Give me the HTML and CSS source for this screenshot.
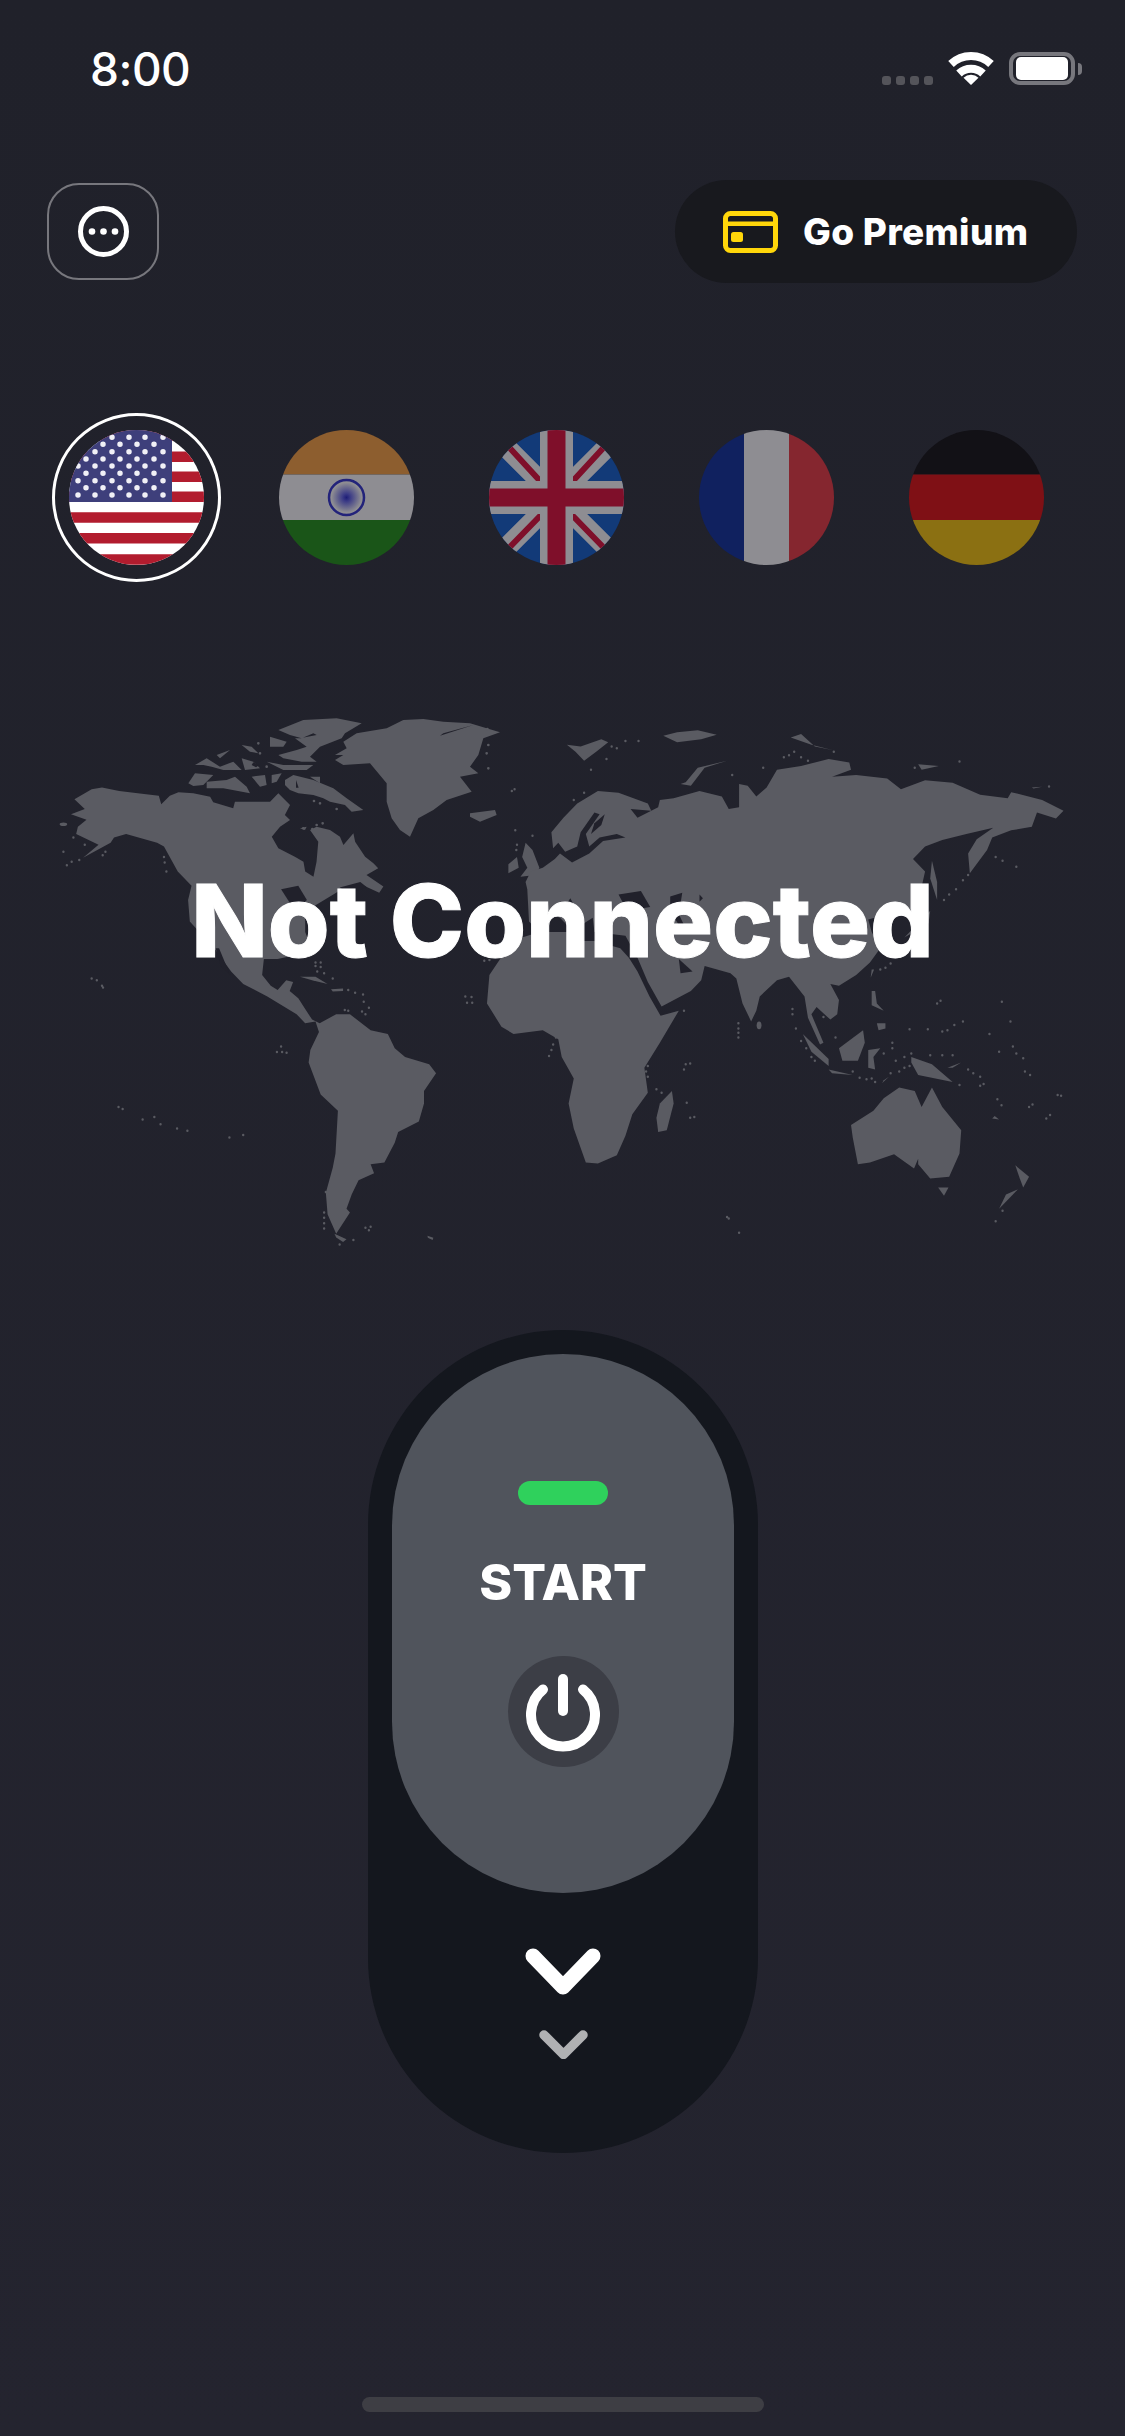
FILE: index.html
```html
<!DOCTYPE html>
<html lang="en">
<head>
<meta charset="utf-8">
<title>VPN</title>
<link rel="stylesheet" href="styles.css">
</head>
<body>
<main class="screen">
  <header class="status">
    <span class="time">8:00</span>
    <div class="status-icons">
      <div class="signal"><i></i><i></i><i></i><i></i></div>
      <svg class="wifi" viewBox="0 0 46 33"><path d="M3 12A29 29 0 0 1 43 12" fill="none" stroke="#fff" stroke-width="8"/><path d="M11 21.500A17.500 17.500 0 0 1 35 21.500" fill="none" stroke="#fff" stroke-width="8"/><path d="M23 33L15.500 25.800A11 11 0 0 1 30.500 25.800z" fill="#fff"/></svg>
      <div class="battery"><div class="battery-body"><div class="battery-fill"></div></div><div class="battery-nub"></div></div>
    </div>
  </header>

  <nav class="topbar">
    <button class="menu-btn" type="button" aria-label="Menu">
      <svg class="menu-icon" viewBox="0 0 51 51"><circle cx="25.500" cy="25.500" r="23" fill="none" stroke="#fff" stroke-width="5"/><circle cx="14" cy="25.500" r="3.300" fill="#fff"/><circle cx="25.500" cy="25.500" r="3.300" fill="#fff"/><circle cx="37" cy="25.500" r="3.300" fill="#fff"/></svg>
    </button>
    <button class="premium-btn" type="button">
      <svg class="card-icon" viewBox="0 0 55 42"><rect x="2.500" y="2.500" width="50" height="37" rx="5" fill="none" stroke="#ffd60a" stroke-width="5"/><rect x="2" y="10.500" width="51" height="4.500" fill="#ffd60a"/><rect x="8" y="21" width="12" height="10" rx="2.500" fill="#ffd60a"/></svg>
      <span>Go Premium</span>
    </button>
  </nav>

  <section class="flags">
    <div class="flag-item selected">
      <svg class="flag" viewBox="0 0 135 135">
        <rect width="135" height="135" fill="#fff"/>
        <path d="M0 5.800H135M0 26.700H135M0 46.700H135M0 66.800H135M0 87.600H135M0 108.300H135M0 129.500H135" stroke="#b21c2e" stroke-width="10.500"/>
        <rect width="103" height="72" fill="#3e3f7b"/>
        <path d="M26 7.300h0M43 7.300h0M60 7.300h0M76 7.300h0M94 7.300h0M17 14.300h0M34 14.300h0M51 14.300h0M68 14.300h0M85 14.300h0M9 21.700h0M26 21.700h0M43 21.700h0M60 21.700h0M76 21.700h0M94 21.700h0M17 29h0M34 29h0M51 29h0M68 29h0M85 29h0M9 36h0M26 36h0M43 36h0M60 36h0M76 36h0M94 36h0M17 43.300h0M34 43.300h0M51 43.300h0M68 43.300h0M85 43.300h0M9 50.700h0M26 50.700h0M43 50.700h0M60 50.700h0M76 50.700h0M94 50.700h0M17 57.700h0M34 57.700h0M51 57.700h0M68 57.700h0M85 57.700h0M9 65h0M26 65h0M43 65h0M60 65h0M76 65h0M94 65h0" stroke="#f0f0f6" stroke-width="5.500" stroke-linecap="round" fill="none"/>
      </svg>
    </div>
    <div class="flag-item">
      <svg class="flag" viewBox="0 0 135 135">
        <defs><radialGradient id="chakra"><stop offset="0" stop-color="#1d1d76"/><stop offset=".25" stop-color="#3a3a86"/><stop offset="1" stop-color="#8e8d92"/></radialGradient></defs>
        <rect width="135" height="44.500" fill="#8d5e2f"/>
        <rect y="44.500" width="135" height="45.500" fill="#8e8d92"/>
        <rect y="90" width="135" height="45" fill="#1a5518"/>
        <circle cx="67.500" cy="67.500" r="15" fill="url(#chakra)"/>
        <circle cx="67.500" cy="67.500" r="17.500" fill="none" stroke="#23237a" stroke-width="2.500"/>
      </svg>
    </div>
    <div class="flag-item">
      <svg class="flag" viewBox="0 0 135 135">
        <rect width="135" height="135" fill="#123a78"/>
        <path d="M0 0L135 135M135 0L0 135" stroke="#8e8d92" stroke-width="20"/>
        <path d="M18 15L52 52M117 120L83 85M18 120L52 85M117 15L83 52" stroke="#7f0f2a" stroke-width="6"/>
        <path d="M67.500 0V135M0 67.500H135" stroke="#8e8d92" stroke-width="33"/>
        <path d="M67.500 0V135M0 67.500H135" stroke="#7f0f2a" stroke-width="18"/>
      </svg>
    </div>
    <div class="flag-item">
      <svg class="flag" viewBox="0 0 135 135">
        <rect width="45" height="135" fill="#10215f"/>
        <rect x="45" width="45" height="135" fill="#8e8d92"/>
        <rect x="90" width="45" height="135" fill="#85262f"/>
      </svg>
    </div>
    <div class="flag-item">
      <svg class="flag" viewBox="0 0 135 135">
        <rect width="135" height="44.500" fill="#121116"/>
        <rect y="44.500" width="135" height="45.500" fill="#7f1015"/>
        <rect y="90" width="135" height="45" fill="#8b7012"/>
      </svg>
    </div>
  </section>

  <section class="map-area">
    <svg class="world" viewBox="0 0 1125 560" aria-hidden="true">
      <g class="land" transform="translate(40 0) scale(.3444 .3571)">
        <path d="M100 278L150 250 180 245 230 255 290 262 345 268 352 292 377 268 402 258 445 261 494 271 503 286 561 303 566 285 615 285 668 285 692 261 726 294 711 322 726 336 697 355 673 383 692 415 740 439 765 453 770 480 794 495 803 453 808 397 784 364 803 355 842 364 871 383 881 406 910 373 915 397 944 439 968 457 982 471 948 490 997 522 985 540 930 515 880 525 860 540 800 575 770 610 770 650 790 700 770 720 740 715 690 725 650 725 645 770 670 800 690 812 715 785 735 790 725 815 750 835 770 865 790 895 812 905 860 880 900 880 960 925 1010 935 1030 975 1060 1000 1130 1020 1150 1045 1115 1095 1115 1130 1100 1180 1040 1210 1030 1240 1000 1295 960 1300 970 1325 925 1345 905 1385 890 1425 900 1435 860 1495 835 1440 830 1380 850 1310 858 1270 865 1150 815 1105 780 1015 785 980 810 930 800 900 770 905 745 880 660 830 590 795 555 760 510 700 435 620 430 560 440 520 400 480 360 410 340 400 250 375 215 385 205 400 125 442 170 405 105 375 110 355 135 335 90 320 130 305z"/>
        <path d="M755 775L800 775 835 795 790 785z"/>
        <path d="M845 810L880 808 880 815 850 816z"/>
        <path d="M855 1495L890 1510 880 1518 860 1505z"/>
        <path d="M1410 400L1430 420 1450 470 1440 490 1395 495 1415 470 1400 440z"/>
        <path d="M1360 460L1385 440 1390 470 1360 485z"/>
        <path d="M1125 1500L1142 1506 1140 1512 1126 1506z"/>
        <ellipse cx="68" cy="348" rx="11" ry="5"/>
        <path class="dots" d="M150 780h0M165 785h0M180 800h0M183 805h0M228 1140h0M240 1145h0M298 1175h0M332 1168h0M350 1188h0M398 1200h0M428 1206h0M550 1225h0M590 1218h0M700 970h0M688 986h0M703 986h0M716 988h0M1235 830h0M1253 832h0M1240 848h0M1255 848h0M800 735h0M815 735h0M800 745h0M815 748h0M805 760h0M825 765h0M850 780h0M895 812h0M915 820h0M938 825h0M940 845h0M955 862h0M935 872h0M945 880h0M885 868h0M895 870h0M830 1378h0M825 1435h0M825 1450h0M825 1465h0M825 1480h0M945 1478h0M960 1475h0M955 1485h0M910 1512h0M870 1525h0M68 425h0M78 463h0M92 453h0M114 448h0M130 405h0M97 385h0M182 435h0M190 425h0M360 440h0M362 455h0M367 480h0M1290 730h0M1305 728h0M1498 945h0M1490 965h0M1485 980h0M1478 997h0M1370 255h0M1378 250h0M1380 365h0M1385 405h0M1383 420h0M1430 380h0"/>
      </g>
      <g class="land" transform="translate(170 5) scale(.33333)">
        <path d="M325 75L400 45 500 40 575 55 525 85 515 100 450 125 420 155 440 170 395 170 340 160 325 150 380 135 410 125 375 100 390 100 440 90 430 85 395 100 360 90z"/>
        <path d="M300 95L350 110 340 125 300 125z"/>
        <path d="M215 120L245 125 265 145 240 140z"/>
        <path d="M140 150L180 135 150 160z"/>
        <path d="M75 180L110 160 150 185 190 170 215 195 160 195 125 185 100 180z"/>
        <path d="M55 235L75 205 130 210 100 240 70 243z"/>
        <path d="M110 230L170 225 195 215 230 245 240 265 160 250 110 250z"/>
        <path d="M245 215L285 210 290 240 270 245z"/>
        <path d="M305 210L335 205 320 230 305 235z"/>
        <path d="M290 170L340 180 430 180 410 195 340 195z"/>
        <path d="M215 160L250 170 270 190 225 195z"/>
        <path d="M345 225L370 210 430 225 490 250 530 280 580 315 545 320 525 300 480 290 460 280 430 270 385 265 360 255 345 240z"/>
        <path d="M420 215L450 215 450 235z"/>
        <path d="M495 150L530 130 520 110 560 85 650 70 700 45 760 42 820 50 900 55 990 82 940 100 925 150 900 185 925 205 870 215 905 260 830 285 790 315 745 340 720 395 690 375 665 340 650 290 650 235 600 175 520 180 495 165 520 150z"/>
        <path d="M900 325L975 315 980 330 930 350 900 335z"/>
        <path d="M390 370L410 365 405 375z"/>
        <path class="dots dots-fine" d="M400 370h0M427 372h0M440 360h0M458 355h0M450 295h0M432 288h0M500 312h0M265 115h0M290 185h0M270 145h0M952 72h0M955 120h0M950 145h0M955 190h0"/>
      </g>
      <g class="water" transform="translate(170 5) scale(.33333)">
        <path d="M810 92L910 60 820 85z"/>
        <path d="M250 172L268 180 258 187 245 180z"/>
        <path d="M378 225L386 248 378 248z"/>
      </g>
      <g class="land" transform="translate(560 0) scale(.3444 .3571)">
        <path d="M-100 510L-85 480-50 470-15 445 0 430 35 455 85 430 125 395 190 385 165 375 115 385 85 410 75 375 115 320 100 315 60 370 50 410 15 425-5 400-20 415-25 370 10 330 50 290 110 255 170 260 255 290 265 310 205 305 225 330 285 300 290 280 330 275 405 255 470 270 490 305 520 300 520 235 545 240 570 270 600 245 630 195 700 185 780 165 840 175 845 195 790 215 860 210 950 220 990 250 1060 225 1140 232 1220 265 1300 275 1310 258 1400 280 1462 310 1440 332 1385 315 1370 355 1310 365 1255 385 1240 420 1190 485 1185 430 1210 390 1258 358 1180 375 1110 392 1060 410 1025 445 1060 480 1045 545 1015 590 985 580 950 600 895 615 905 650 930 695 900 735 860 770 810 800 785 795 810 840 805 880 785 895 745 860 730 880 765 960 755 965 720 890 710 830 665 775 630 785 580 830 570 870 555 900 530 850 512 780 495 765 420 745 410 785 380 815 295 858 255 790 225 722 190 660 100 650 95 610 70 625 65 665 45 640 55 600 30 555 20 570 30 625 50 660 0 610-25 600-35 625-75 635-90 620-95 530z"/>
        <path d="M-205 770L-212 850-170 915-135 935-50 925-5 950 5 1000 40 1060 25 1130 40 1200 75 1295 110 1298 165 1275 190 1220 210 1160 255 1100 245 1030 290 960 345 870 292 884 260 830 225 760 200 722 175 695 100 675 40 675 25 650-60 650-110 665-170 720z"/>
        <path d="M325 1095L330 1130 310 1205 285 1210 280 1170 290 1130z"/>
        <path d="M845 1190L910 1150 940 1115 985 1085 1030 1095 1050 1140 1080 1085 1110 1140 1165 1205 1160 1270 1130 1335 1075 1340 1040 1300 1040 1285 1028 1312 970 1272 900 1295 865 1300 850 1225z"/>
        <path d="M1098 1365L1128 1365 1115 1388z"/>
        <path d="M1322 1303L1362 1335 1345 1365 1335 1340z"/>
        <path d="M1330 1370L1275 1425 1295 1385z"/>
        <path d="M1020 1000L1080 1020 1140 1070 1090 1060 1040 1050 1020 1015z"/>
        <path d="M810 975L880 925 885 960 865 1010 820 1010z"/>
        <path d="M705 935L780 1005 780 1025 730 985z"/>
        <path d="M780 1035L850 1050 790 1045z"/>
        <path d="M895 980L930 975 910 1000 915 1035 895 1030z"/>
        <path d="M905 815L915 815 920 850 940 870 905 855z"/>
        <path d="M920 905L945 905 945 920 925 925z"/>
        <path d="M1080 450L1095 510 1095 560 1075 500z"/>
        <path d="M1075 590L1070 625 1000 665 1040 625z"/>
        <path d="M905 755L912 755 902 778z"/>
        <path d="M940 1065L955 1055 935 1073z"/>
        <path d="M1165 1015L1140 1030 1125 1030z"/>
        <path d="M1262 1165L1275 1175 1255 1172z"/>
        <path d="M20 125L60 130 120 110 140 118 105 145 70 170 45 145z"/>
        <path d="M300 100L340 90 400 85 455 97 410 110 340 118z"/>
        <path d="M670 105L700 95 740 130 790 140 730 125z"/>
        <path d="M365 230L400 190 485 170 420 190 380 240 350 235z"/>
        <path d="M1040 180L1100 185 1050 195z"/>
        <path d="M1370 245L1400 243 1375 248z"/>
        <ellipse cx="578" cy="911" rx="7" ry="11"/>
        <path class="dots" d="M675 865h0M675 880h0M518 905h0M518 920h0M518 932h0M518 945h0M255 1025h0M250 1040h0M255 1055h0M280 1090h0M295 1100h0M365 1020h0M378 1018h0M360 1035h0M368 1128h0M378 1170h0M390 1168h0M685 920h0M700 955h0M715 975h0M730 1000h0M740 1010h0M800 945h0M360 870h0M1265 440h0M1285 450h0M1325 467h0M1185 490h0M1170 505h0M1150 530h0M1130 545h0M1115 560h0M930 755h0M945 750h0M960 738h0M765 888h0M1095 850h0M1105 842h0M1283 845h0M1308 900h0M1247 935h0M1170 900h0M1145 910h0M1125 925h0M1110 928h0M1068 922h0M1015 922h0M1315 970h0M1325 990h0M1345 1003h0M1350 1040h0M1365 1050h0M1275 985h0M1185 1035h0M1200 1045h0M1220 1055h0M1230 1075h0M1220 1080h0M1160 1078h0M1270 1118h0M1282 1135h0M1372 1133h0M1362 1140h0M1423 1162h0M1412 1172h0M1445 1106h0M1455 1108h0M1285 1430h0M1265 1460h0M485 1448h0M490 1452h0M520 1492h0M1110 995h0M1140 995h0M1075 995h0M850 1040h0M870 1058h0M890 1062h0M905 1060h0M915 1070h0M960 1045h0M985 1040h0M1000 1030h0M1015 1025h0M940 990h0M965 975h0M965 960h0M975 1010h0M1000 1000h0M1020 990h0M150 130h0M165 135h0M190 115h0M228 115h0M650 160h0M665 155h0M680 145h0M700 160h0M720 170h0M795 145h0M590 190h0M500 210h0M135 165h0M90 195h0M40 280h0M70 260h0M1030 190h0M1160 172h0M1420 242h0"/>
      </g>
      <g class="water" transform="translate(560 0) scale(.3444 .3571)">
        <path d="M170 545L235 535 262 580 195 590z"/>
        <path d="M320 550L355 540 345 600 365 640 345 630 320 590z"/>
        <path d="M405 545L415 555 405 565z"/>
        <path d="M345 725L385 760 350 765z"/>
        <path d="M100 345L130 320 120 350 90 375z"/>
      </g>
      <g class="water" transform="translate(40 0) scale(.3444 .3571)">
        <path d="M510 695L520 695 552 770 525 745z"/>
        <path d="M870 525L930 510 950 525 900 540z"/>
        <path d="M700 530L750 520 775 560 740 590 720 560z"/>
      </g>
    </svg>
    <h1 class="title">Not Connected</h1>
  </section>

  <section class="switch">
    <div class="knob">
      <div class="led"></div>
      <div class="start">START</div>
      <div class="power">
        <svg class="power-icon" viewBox="0 0 74 78"><path d="M17 15.500A32 32 0 1 0 57 15.500" fill="none" stroke="#fff" stroke-width="10" stroke-linecap="round"/><path d="M37 5V37" fill="none" stroke="#fff" stroke-width="10" stroke-linecap="round"/></svg>
      </div>
    </div>
    <svg class="chev-large" viewBox="0 0 76 47"><path d="M8 8L38 39 68 8" fill="none" stroke="#fff" stroke-width="15" stroke-linecap="round" stroke-linejoin="round"/></svg>
    <svg class="chev-small" viewBox="0 0 49 29"><path d="M5 5L24.500 24.500 44 5" fill="none" stroke="#b0b1b3" stroke-width="9.500" stroke-linecap="round" stroke-linejoin="round"/></svg>
  </section>

  <div class="home-indicator"></div>
</main>
</body>
</html>
```
FILE: styles.css
```css
* { box-sizing: border-box; }
html, body { margin: 0; padding: 0; background: #212129; }
.screen {
  width: 1125px;
  height: 2436px;
  overflow: hidden;
  background: linear-gradient(#20212a, #24242f);
  font-family: Inter, "Liberation Sans", sans-serif;
  color: #fff;
}
.status {
  height: 100px;
  padding: 52px 43px 0 90px;
  display: flex;
  justify-content: space-between;
  align-items: flex-start;
}
.time {
  font-size: 46px;
  line-height: 34px;
  font-weight: 500;
  letter-spacing: -.5px;
}
.status-icons { display: flex; align-items: flex-start; }
.signal {
  display: flex;
  gap: 5px;
  margin-top: 24px;
  margin-right: 15px;
}
.signal i {
  width: 9px;
  height: 9px;
  border-radius: 3px;
  background: #54545a;
}
.wifi { width: 46px; height: 33px; margin-right: 15px; display: block; }
.battery { display: flex; align-items: center; height: 33px; }
.battery-body {
  width: 66px;
  height: 33px;
  border: 4px solid #77777d;
  border-radius: 11px;
  padding: 1px 3px;
}
.battery-fill { width: 100%; height: 100%; background: #fff; border-radius: 5px; }
.battery-nub {
  width: 4px;
  height: 12px;
  margin-left: 3px;
  background: #77777d;
  border-radius: 0 4px 4px 0;
}
.topbar {
  margin-top: 80px;
  height: 103px;
  padding: 0 48px 0 47px;
  display: flex;
  justify-content: space-between;
  align-items: center;
}
.menu-btn {
  width: 112px;
  height: 97px;
  padding: 0;
  background: transparent;
  border: 2px solid #77777d;
  border-radius: 32px;
  display: flex;
  align-items: center;
  justify-content: center;
}
.menu-icon { width: 51px; height: 51px; display: block; }
.premium-btn {
  width: 402px;
  height: 103px;
  padding: 0 0 0 48px;
  background: #18191e;
  border: 0;
  border-radius: 52px;
  display: flex;
  align-items: center;
  gap: 25px;
  color: #fff;
  font: 800 37px Inter, "Liberation Sans", sans-serif;
  letter-spacing: .3px;
}
.card-icon { width: 55px; height: 42px; display: block; }
.flags {
  margin-top: 130px;
  padding-left: 52px;
  display: flex;
  gap: 41px;
}
.flag-item {
  width: 169px;
  height: 169px;
  border-radius: 50%;
  display: flex;
  align-items: center;
  justify-content: center;
  border: 3px solid transparent;
}
.flag-item.selected { border-color: #fff; }
.flag {
  width: 135px;
  height: 135px;
  border-radius: 50%;
  display: block;
  filter: blur(.6px);
}
.map-area {
  position: relative;
  margin-top: 118px;
  height: 560px;
}
.world { width: 1125px; height: 560px; display: block; }
.land { fill: #5a5b62; }
.water { fill: #21212b; }
.dots {
  fill: none;
  stroke: #5a5b62;
  stroke-width: 7;
  stroke-linecap: round;
}
.dots-fine { stroke-width: 8; }
.title {
  position: absolute;
  left: 0;
  right: 0;
  top: 161px;
  margin: 0;
  text-align: center;
  font-size: 100px;
  line-height: 120px;
  font-weight: 800;
  -webkit-text-stroke: 1px #fff;
  color: #fff;
}
.switch {
  margin: 70px 0 0 368px;
  width: 390px;
  height: 823px;
  padding-top: 24px;
  border-radius: 195px;
  background: #14171e;
  display: flex;
  flex-direction: column;
  align-items: center;
}
.knob {
  width: 342px;
  height: 539px;
  padding-top: 127px;
  border-radius: 171px;
  background: #50545c;
  display: flex;
  flex-direction: column;
  align-items: center;
}
.led { width: 90px; height: 24px; border-radius: 12px; background: #2fd15c; }
.start {
  margin-top: 47px;
  font-size: 50px;
  line-height: 60px;
  font-weight: 800;
}
.power {
  width: 111px;
  height: 111px;
  margin-top: 44px;
  border-radius: 50%;
  background: #3c3e46;
  display: flex;
  justify-content: center;
  padding-top: 18px;
}
.power-icon { width: 74px; height: 78px; display: block; }
.chev-large { width: 76px; height: 47px; margin-top: 55px; display: block; }
.chev-small { width: 49px; height: 29px; margin-top: 35px; display: block; }
.home-indicator {
  width: 402px;
  height: 15px;
  margin: 244px 0 0 362px;
  border-radius: 8px;
  background: #3e3e44;
}
```
